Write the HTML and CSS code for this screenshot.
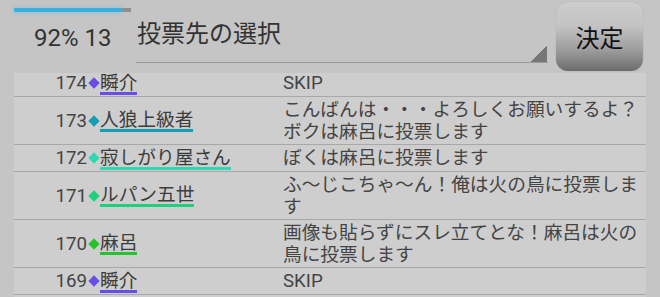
FILE: index.html
```html
<!DOCTYPE html>
<html lang="ja">
<head>
  <meta charset="UTF-8">
  <title>投票先の選択</title>
  <link rel="stylesheet" href="styles.css">
</head>
<body>
  <div class="header">
    <div class="status">
      <div class="progress"><div class="progress-fill" style="width: 92%"></div></div>
      <div class="count">92% 13</div>
    </div>
    <div class="select">投票先の選択</div>
    <button class="decide">決定</button>
  </div>

  <div class="list">
    <div class="row purple first">
      <span class="num">174</span><span class="mark"></span>
      <span class="name"><span class="name-text">瞬介</span></span>
      <span class="msg">SKIP</span>
    </div>
    <div class="row teal">
      <span class="num">173</span><span class="mark"></span>
      <span class="name"><span class="name-text">人狼上級者</span></span>
      <span class="msg">こんばんは・・・よろしくお願いするよ？ボクは麻呂に投票します</span>
    </div>
    <div class="row aqua">
      <span class="num">172</span><span class="mark"></span>
      <span class="name"><span class="name-text">寂しがり屋さん</span></span>
      <span class="msg">ぼくは麻呂に投票します</span>
    </div>
    <div class="row mint">
      <span class="num">171</span><span class="mark"></span>
      <span class="name"><span class="name-text">ルパン五世</span></span>
      <span class="msg">ふ～じこちゃ～ん！俺は火の鳥に投票します</span>
    </div>
    <div class="row green">
      <span class="num">170</span><span class="mark"></span>
      <span class="name"><span class="name-text">麻呂</span></span>
      <span class="msg">画像も貼らずにスレ立てとな！麻呂は火の鳥に投票します</span>
    </div>
    <div class="row purple">
      <span class="num">169</span><span class="mark"></span>
      <span class="name"><span class="name-text">瞬介</span></span>
      <span class="msg">SKIP</span>
    </div>
  </div>
</body>
</html>
```

FILE: styles.css
```css
body {
  margin: 0;
  width: 660px;
  height: 297px;
  overflow: hidden;
  background: #c5c5c5;
  color: #3c3c3c;
  font-family: Roboto, "Noto Sans CJK JP", sans-serif;
}

/* header */
.header {
  display: flex;
  height: 73px;
}

.status {
  width: 122px;
  margin-left: 14px;
}

.progress {
  width: 117px;
  height: 4px;
  margin-top: 8px;
  background: #8e8e8e;
}

.progress-fill {
  height: 100%;
  background: #38b1e1;
  box-shadow: 0 0 4px rgba(80, 190, 240, 0.6);
}

.count {
  padding-left: 20px;
  margin-top: 14px;
  font-size: 24px;
  line-height: 24px;
  color: #333;
}

.select {
  width: 412px;
  height: 63px;
  box-sizing: border-box;
  padding: 22px 0 0 1px;
  font-size: 24px;
  line-height: 24px;
  color: #333;
  border-bottom: 1.5px solid #9a9a9a;
  background: linear-gradient(to bottom right, transparent 50%, #777 50%) no-repeat right 1px bottom / 16px 16px;
}

.decide {
  width: 87px;
  height: 69px;
  margin: 2px 0 0 8px;
  padding: 0;
  border: none;
  border-radius: 12px;
  background: linear-gradient(#cdcdcd, #c3c3c3 35%, #9c9c9c 70%, #6c6c6c);
  box-shadow: 0 0 1px rgba(0, 0, 0, 0.3);
  font-family: Roboto, "Noto Sans CJK JP", sans-serif;
  font-size: 24px;
  color: #111;
}

/* vote list */
.list {
  margin: 0 14px;
  height: 224px;
  overflow: hidden;
  background: #cecece;
}

.row {
  display: flex;
  align-items: center;
  padding: 1.5px 0;
  border-bottom: 1px solid #a8a8a8;
  font-size: 18.7px;
  line-height: 22px;
}

.row.first {
  margin-top: -3px;
}

.num {
  width: 73px;
  text-align: right;
  color: #444;
}

.mark {
  width: 8px;
  height: 8px;
  margin: 0 2.5px;
  background: var(--c);
  transform: rotate(45deg);
}

.name {
  width: 183px;
}

.name-text {
  display: inline-block;
  padding-top: 2px;
  line-height: 18px;
  border-bottom: 3px solid var(--c);
}

.msg {
  flex: 1;
  color: #444;
}

.purple { --c: #6a4de8; }
.teal { --c: #149db4; }
.aqua { --c: #30d8b2; }
.mint { --c: #1dd07b; }
.green { --c: #28c22e; }
```
